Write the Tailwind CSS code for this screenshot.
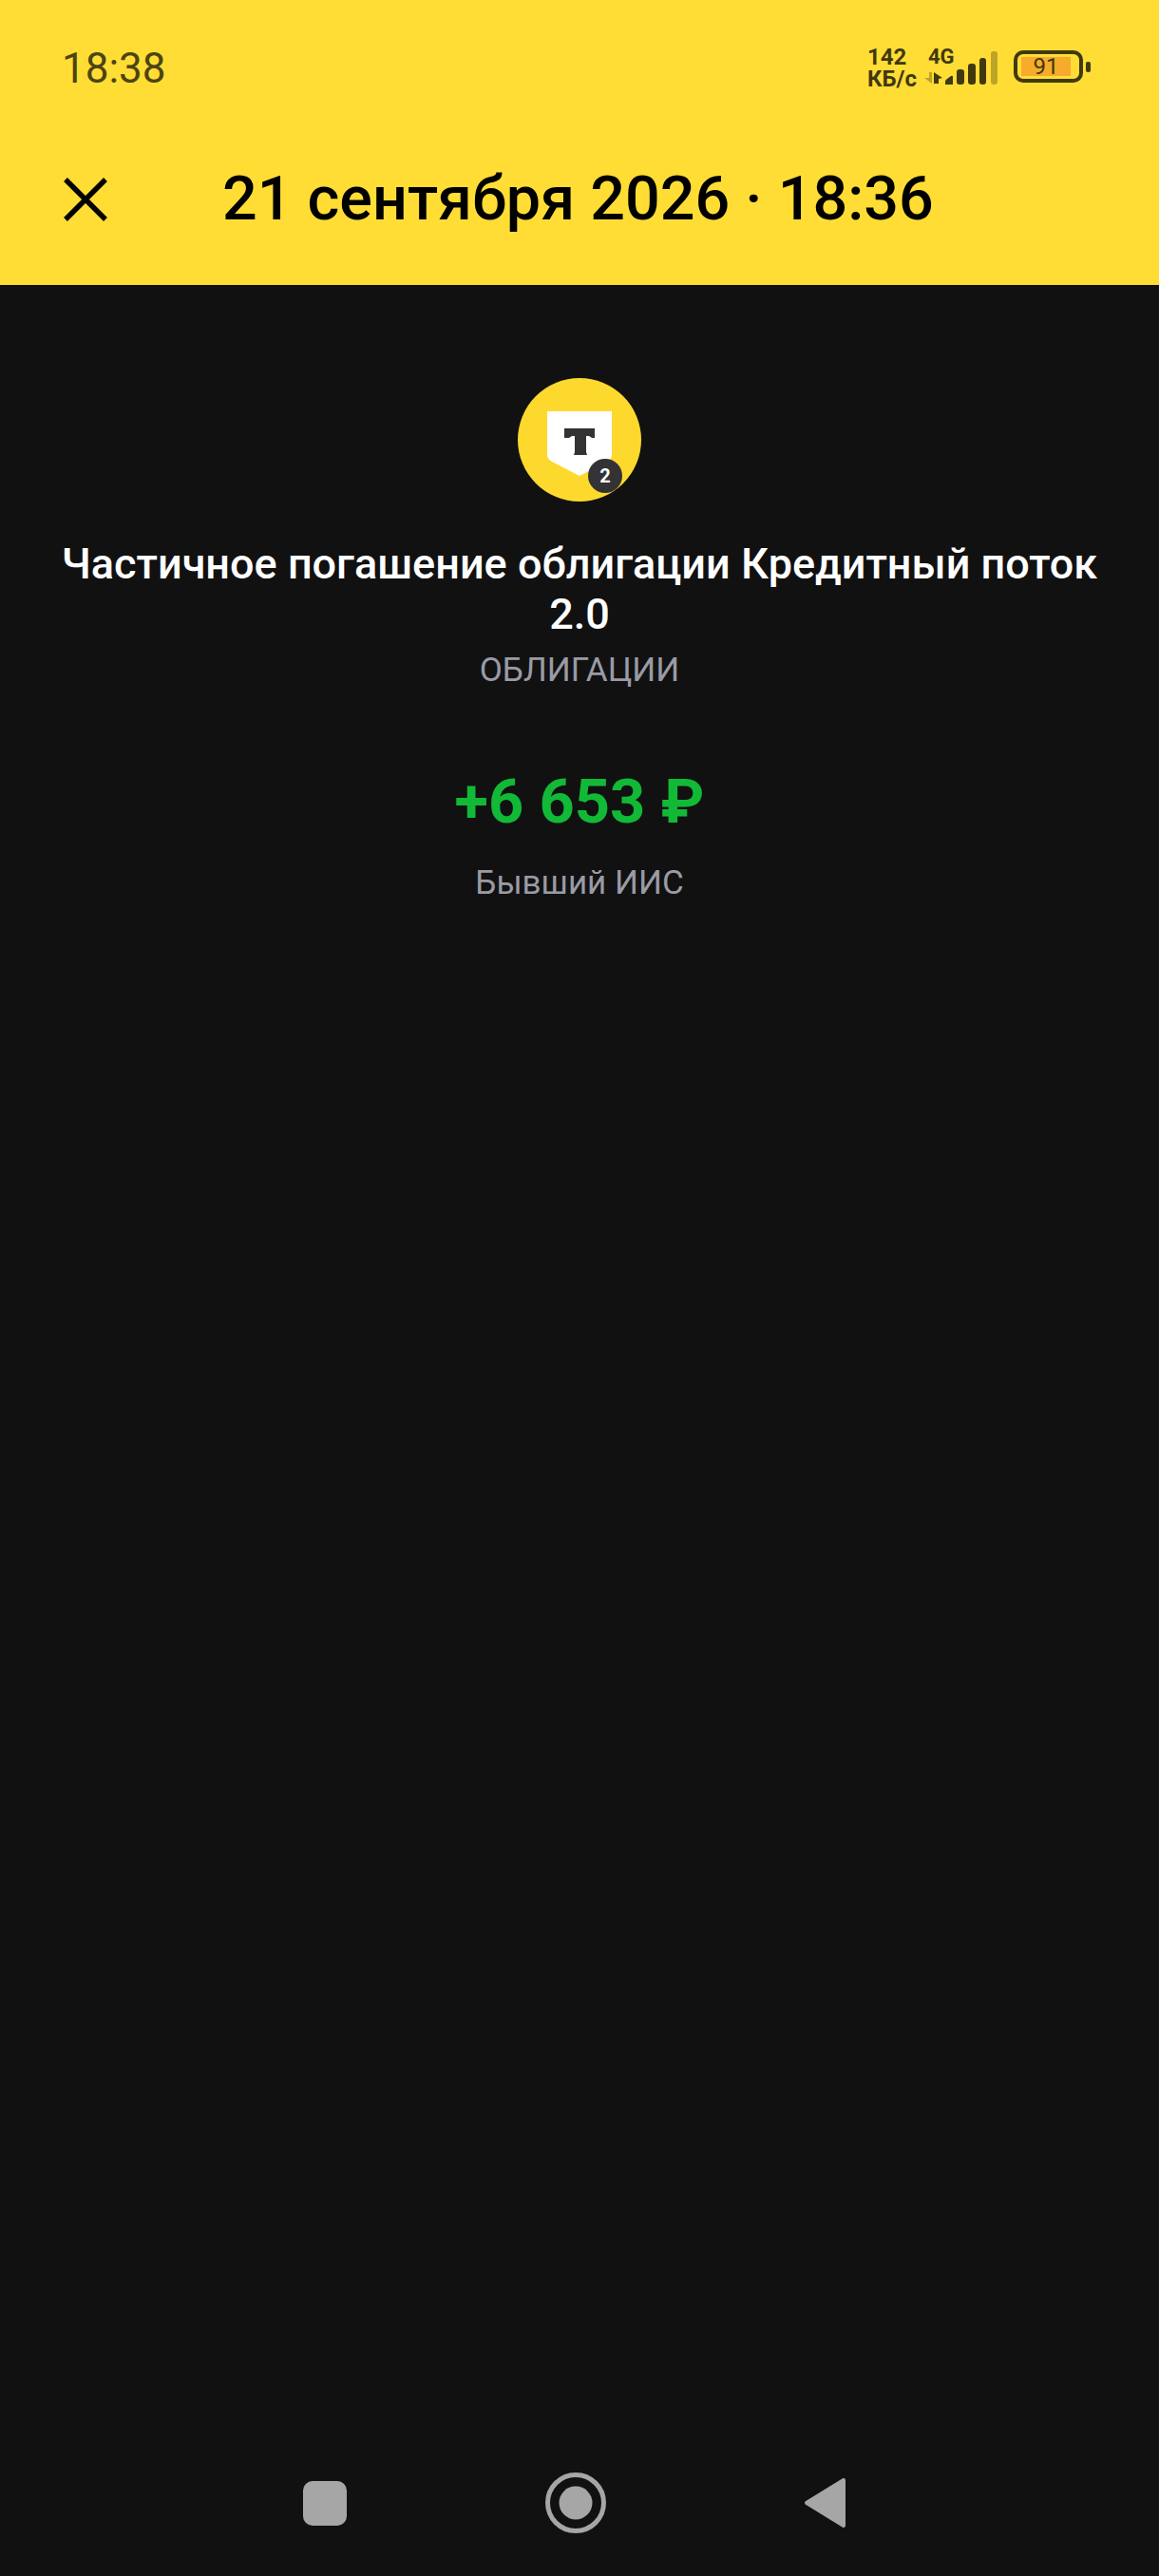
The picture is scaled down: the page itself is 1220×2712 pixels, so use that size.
<!DOCTYPE html>
<html lang="ru">
<head>
<meta charset="UTF-8">
<title>Операция</title>
<script src="https://cdn.jsdelivr.net/npm/@tailwindcss/browser@4"></script>
</head>
<body class="bg-[#111112] font-['Roboto',sans-serif]">
<div class="w-[1220px] h-[2712px] flex flex-col overflow-hidden">
  <!-- шапка -->
  <header class="h-[300px] bg-[#ffdd35] px-[65px] shrink-0">
    <div class="h-[143px] flex items-center justify-between pt-[1px]">
      <span class="text-[44px] leading-none text-[#4d4410]">18:38</span>
      <div class="flex items-center text-[#40390f] mr-[7px]">
        <div class="w-[52px] mb-[1px] text-[24px] leading-[23px] font-bold"><div>142</div><div>КБ/с</div></div>
        <svg class="ml-[8px] mb-[6px]" width="78" height="46" viewBox="0 -4 78 46">
          <text x="4" y="17" font-size="22" font-weight="700" font-family="Roboto" fill="#40390f">4G</text>
          <path d="M5 26h3v12l-8-6h5z" fill="#40390f" opacity=".35"/>
          <path d="M10 26l9 6-4 1v5h-5z" fill="#40390f"/>
          <path d="M22 36q0-2 2-3l4-3q2-1 2 1v8h-8z" fill="#40390f"/>
          <rect x="34" y="23" width="8" height="16" rx="3" fill="#40390f"/>
          <rect x="46" y="17" width="8" height="22" rx="3" fill="#40390f"/>
          <rect x="58" y="11" width="7" height="28" rx="3" fill="#40390f"/>
          <rect x="70" y="4" width="7" height="35" rx="3" fill="#40390f" opacity=".35"/>
        </svg>
        <div class="ml-[16px] mb-[4px] w-[73px] h-[34px] border-[4px] border-[#40390f] rounded-[10px] py-[3px] px-[4px] flex">
          <div class="w-[52px] bg-[#f6ab2c] text-[24px] leading-[20px] text-center text-[#40390f]">91</div>
        </div>
        <div class="ml-[3px] mb-[3px] w-[5px] h-[11px] bg-[#40390f] rounded-[2px]"></div>
      </div>
    </div>
    <div class="h-[130px] flex items-center pt-[3px]">
      <svg class="ml-[1px]" width="48" height="48" viewBox="0 0 48 48"><path d="M3 3l42 42M45 3L3 45" stroke="#000" stroke-width="5.5" fill="none"/></svg>
      <h1 class="ml-[120px] text-[64.7px] leading-none font-medium text-black whitespace-nowrap">21 сентября 2026 · 18:36</h1>
    </div>
  </header>

  <!-- контент -->
  <main class="flex-1 flex flex-col items-center pt-[98px]">
    <div class="relative w-[130px] h-[130px] rounded-full bg-[#fdd92d] flex items-center justify-center">
      <svg class="mt-[8px]" width="68" height="68" viewBox="0 0 68 68">
        <path d="M0 0h68v46q0 4-5 7l-29 15-29-15q-5-3-5-7z" fill="#fff"/>
        <path d="M18 18h32v10h-3l-3-2h-3v17l1 3h-14l1-3v-17h-3l-3 2h-5z" fill="#333"/>
      </svg>
      <div class="absolute left-[74px] top-[85px] w-[36px] h-[36px] rounded-full bg-[#333336] text-white text-[20px] font-bold leading-[36px] text-center">2</div>
    </div>
    <h2 class="mt-[39px] w-[1120px] text-center text-[45px] leading-[53px] font-medium text-white">Частичное погашение облигации Кредитный поток 2.0</h2>
    <p class="mt-[12px] text-[35px] leading-[42px] text-[#9a9ba4]">ОБЛИГАЦИИ</p>
    <p class="mt-[79px] text-[65px] leading-[76px] font-bold text-[#12b936]">+6 653 ₽</p>
    <p class="mt-[27px] text-[35px] leading-[42px] text-[#9a9ba4]">Бывший ИИС</p>
  </main>

  <!-- навигация -->
  <nav class="h-[124px] shrink-0 flex items-start pt-[15px] pl-[319px]">
    <div class="w-[46px] h-[47px] mt-[9px] bg-[#a6a6a6] rounded-[10px]"></div>
    <svg class="ml-[209px]" width="64" height="64" viewBox="0 0 64 64"><circle cx="32" cy="32" r="29.5" fill="none" stroke="#a6a6a6" stroke-width="5"/><circle cx="32" cy="32" r="17.5" fill="#a6a6a6"/></svg>
    <svg class="ml-[208px] mt-[5px]" width="45" height="54" viewBox="0 0 45 54"><path d="M42 3L3 27l39 24z" fill="#a6a6a6" stroke="#a6a6a6" stroke-width="4" stroke-linejoin="round"/></svg>
  </nav>
</div>
</body>
</html>
